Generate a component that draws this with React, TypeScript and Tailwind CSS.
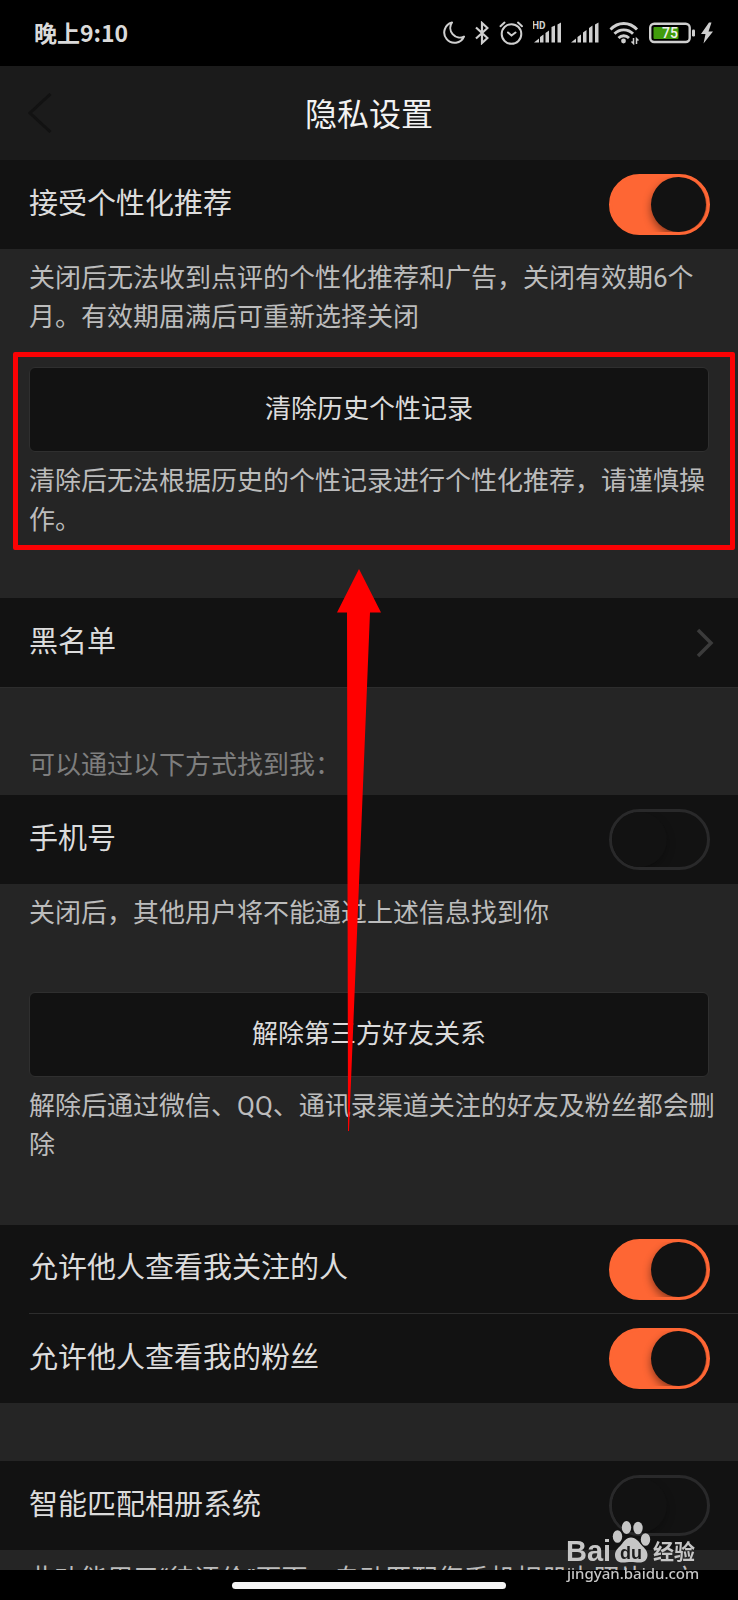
import { useState } from 'react'
import type { ReactNode } from 'react'

function StatusIcons() {
  return (
    <div className="flex items-center gap-[10px] text-[#cfcfcf]">
      {/* Do not disturb */}
      <svg className="h-6 w-[22px]" viewBox="0 0 22 24" fill="none" stroke="currentColor" strokeWidth="2" strokeLinejoin="round">
        <path d="M9 1.5A10.3 10.3 0 1 0 21 15.6 9.6 9.6 0 0 1 9 1.5z" />
      </svg>
      {/* Bluetooth */}
      <svg className="h-6 w-[14px]" viewBox="0 0 14 24" fill="none" stroke="currentColor" strokeWidth="2.2">
        <path d="M1 6.5l11.5 10.500L7 22V2l5.500 5L1 17.500" />
      </svg>
      {/* Alarm */}
      <svg className="h-6 w-6" viewBox="0 0 24 24" fill="none" stroke="currentColor" strokeWidth="2" strokeLinecap="round">
        <circle cx="12.500" cy="13" r="9.800" />
        <path d="M9 11.500l3.500 3 4-3M1.500 5.200L5.500 1.600M23 5.200L19 1.600" />
      </svg>
      {/* SIM 1 */}
      <svg className="h-6 w-7" viewBox="0 0 28 24" fill="currentColor">
        <text x="-1" y="8" fontSize="10" fontWeight="700">HD</text>
        <path d="M1 21.500l5-4v4zM7 16l3.500-2.500v8H7zM12.500 12l3.500-2.500v12h-3.500zM18.500 6L22 4.500v17h-3.500zM24.500 3.500L28 1.500v20h-3.500z" />
      </svg>
      {/* SIM 2 */}
      <svg className="h-6 w-7" viewBox="0 0 28 24" fill="currentColor">
        <path d="M0 21.500l5-4v4zM6.500 16l3.500-2.500v8H6.500zM12 11.500l3.500-2.500v12.500H12zM18 7l3.500-2.500v17H18zM24 3.500l3.500-2v20H24z" />
      </svg>
      {/* Wi-Fi */}
      <svg className="h-6 w-[30px]" viewBox="0 0 30 24" fill="none" stroke="currentColor" strokeWidth="2.800">
        <path d="M1.500 8.500C9 .5 20.500 .5 28 8.500M5.500 12.800c5-5.300 13.500-5.300 18.500 0M9.500 17c3-3 7.500-3 10.500 0" />
        <circle cx="14.500" cy="20" r="2.400" fill="currentColor" stroke="none" />
        <path strokeWidth="1.500" d="M24.500 17v5.500l-2-2M27.500 23v-5.500l2 2" />
      </svg>
      {/* Battery */}
      <svg className="h-6 w-[46px]" viewBox="0 0 46 24">
        <rect x="1.200" y="2.700" width="39.500" height="18.300" rx="4" fill="none" stroke="currentColor" strokeWidth="2.400" />
        <rect x="4.500" y="6" width="25" height="12" rx="1" fill="#409b0c" />
        <rect x="43" y="8.500" width="3" height="7" rx="1.200" fill="currentColor" />
        <text x="21" y="17" fontSize="14" fontWeight="500" textAnchor="middle" fill="#f0f0f0">75</text>
      </svg>
      {/* Charging */}
      <svg className="-ml-1 h-6 w-3" viewBox="0 0 12 24" fill="currentColor">
        <path d="M8 1.500L0 13h4.500L2.500 22.500 12 10.500H7.500L10.500 1.500z" />
      </svg>
    </div>
  )
}

function Row({ children }: { children: ReactNode }) {
  return <div className="flex h-[89px] items-center justify-between pr-7 text-[29px] text-[#dcdcdc]">{children}</div>
}

function SwitchRow({ id, label, on = false }: { id: string; label: string; on?: boolean }) {
  const [checked, setChecked] = useState(on)

  return (
    <Row>
      <label htmlFor={id}>{label}</label>
      <input
        id={id}
        type="checkbox"
        role="switch"
        checked={checked}
        onChange={(e) => setChecked(e.target.checked)}
        className="h-[61px] w-[101px] shrink-0 appearance-none overflow-hidden rounded-full border-3 border-[#29292a] bg-[#121212] before:block before:size-[55px] before:rounded-full before:bg-[#121212] before:shadow-[0_4px_8px_rgba(0,0,0,0.25)] before:content-[''] checked:border-[#fe6634] checked:bg-[#fe6634] checked:before:translate-x-[39px] checked:before:shadow-[0_4px_8px_rgba(0,0,0,0.45)]"
      />
    </Row>
  )
}

function Note({ children }: { children: ReactNode }) {
  return <p className="py-[10px] pr-5 pl-[29px] text-[26px] leading-[39px] text-[#bcbcbc]">{children}</p>
}

function ActionButton({ children }: { children: ReactNode }) {
  return (
    <div className="px-[29px]">
      <button
        type="button"
        className="h-[85px] w-full rounded-md border border-[#2f2f2f] bg-[#121212] text-[26px] text-[#dcdcdc]"
      >
        {children}
      </button>
    </div>
  )
}

function Watermark() {
  return (
    <svg className="absolute right-9 bottom-4 h-[66px] w-[137px]" viewBox="0 0 137 66" fill="#c6c6c6">
      <text x="1" y="43" fontSize="29" fontWeight="700" fontFamily="Liberation Sans, sans-serif">Bai</text>
      <ellipse cx="52.500" cy="18.500" rx="4.700" ry="6.300" />
      <ellipse cx="61.500" cy="9.500" rx="4.700" ry="6.500" />
      <ellipse cx="73" cy="10" rx="4.700" ry="6.300" />
      <ellipse cx="80.500" cy="21.500" rx="4.700" ry="6.300" />
      <path d="M66 19.500c5 0 7.500 4 10.500 7.500 3 3.300 6 5.500 6 10 0 5-3.500 7.500-8 7.500-3.500 0-5.500-.5-8.500-.5s-5 .5-8.500 .5c-4.500 0-7.500-2.500-7.500-7.500 0-4.500 3-6.700 6-10 3-3.500 5-7.500 10-7.500z" />
      <text x="66" y="41" fontSize="18" fontWeight="700" textAnchor="middle" fill="#1c1c1c" fontFamily="Liberation Sans, sans-serif">du</text>
      <text x="88" y="41" fontSize="21" fontWeight="700">经验</text>
      <text x="2" y="61" fontSize="15" fontWeight="500" fontFamily="Noto Sans, sans-serif">jingyan.baidu.com</text>
    </svg>
  )
}

function App() {
  return (
    <div className="relative flex h-screen flex-col bg-black font-[Roboto,'Noto_Sans_CJK_SC',sans-serif]">
      {/* Status bar */}
      <div className="flex h-[66px] shrink-0 items-center justify-between pr-[25px] pl-[34px]">
        <span className="pb-[2px] font-['Noto_Sans_CJK_SC',sans-serif] text-[23px] leading-8 font-bold text-[#dadada]">晚上9:10</span>
        <StatusIcons />
      </div>

      {/* Title bar */}
      <header className="grid h-[94px] shrink-0 grid-cols-[1fr_auto_1fr] items-center bg-[#1b1b1b] px-7">
        <button type="button" aria-label="返回" className="justify-self-start">
          <svg className="h-10 w-6" viewBox="0 0 24 40" fill="none" stroke="#121212" strokeWidth="3">
            <path d="M22.500 1L2 20l20.500 19" />
          </svg>
        </button>
        <h1 className="pt-1 text-[32px] text-[#f2f2f2]">隐私设置</h1>
      </header>

      <main className="relative flex-1 overflow-y-auto bg-[#252525] [scrollbar-width:none]">
        <div className="bg-[#121212] pl-[29px]">
          <SwitchRow id="recommend" label="接受个性化推荐" on />
        </div>
        <Note>关闭后无法收到点评的个性化推荐和广告，关闭有效期6个月。有效期届满后可重新选择关闭</Note>

        <section className="relative mt-5 mb-12">
          <ActionButton>清除历史个性记录</ActionButton>
          <Note>清除后无法根据历史的个性记录进行个性化推荐，请谨慎操作。</Note>
          {/* Highlight box */}
          <div className="pointer-events-none absolute -top-[15px] right-[3px] bottom-0 left-[13px] rounded-xs border-[5px] border-[#fb0204]"></div>
        </section>

        <div className="border-b border-[#2d2d2d] bg-[#121212] pl-[29px]">
          <Row>
            <a href="#blacklist">黑名单</a>
            <svg className="-mr-1 h-8 w-5" viewBox="0 0 20 32" fill="none" stroke="#3b3b3b" strokeWidth="3.500">
              <path d="M4 3l13 13L4 29" />
            </svg>
          </Row>
        </div>

        <h2 className="mt-[58px] pb-[10px] pl-[29px] text-[26px] leading-[39px] text-[#7e7e7e]">可以通过以下方式找到我：</h2>
        <div className="bg-[#121212] pl-[29px]">
          <SwitchRow id="phone" label="手机号" />
        </div>
        <Note>关闭后，其他用户将不能通过上述信息找到你</Note>

        <section className="mt-[49px] mb-[50px]">
          <ActionButton>解除第三方好友关系</ActionButton>
          <Note>解除后通过微信、QQ、通讯录渠道关注的好友及粉丝都会删除</Note>
        </section>

        <div className="divide-y divide-[#2d2d2d] bg-[#121212] pl-[29px]">
          <SwitchRow id="following" label="允许他人查看我关注的人" on />
          <div>
            <SwitchRow id="fans" label="允许他人查看我的粉丝" on />
          </div>
        </div>

        <div className="mt-[58px] bg-[#121212] pl-[29px]">
          <SwitchRow id="album" label="智能匹配相册系统" />
        </div>
        <Note>此功能用于“待评价”页面，自动匹配您手机相册中照片，方便您快速发表评价</Note>

        {/* Arrow pointing at the highlight box */}
        <svg className="pointer-events-none absolute top-[409px] left-[337px] h-[562px] w-11" viewBox="0 0 44 562" fill="#ff0000">
          <path d="M22 0L44 43.500H33L12 562H11L10 43.500H0z" />
        </svg>
      </main>

      {/* Gesture bar */}
      <div className="flex h-[30px] shrink-0 items-center justify-center bg-black">
        <div className="h-[7px] w-[37%] rounded-full bg-[#f5f5f5]"></div>
      </div>

      <Watermark />
    </div>
  )
}

export default App
